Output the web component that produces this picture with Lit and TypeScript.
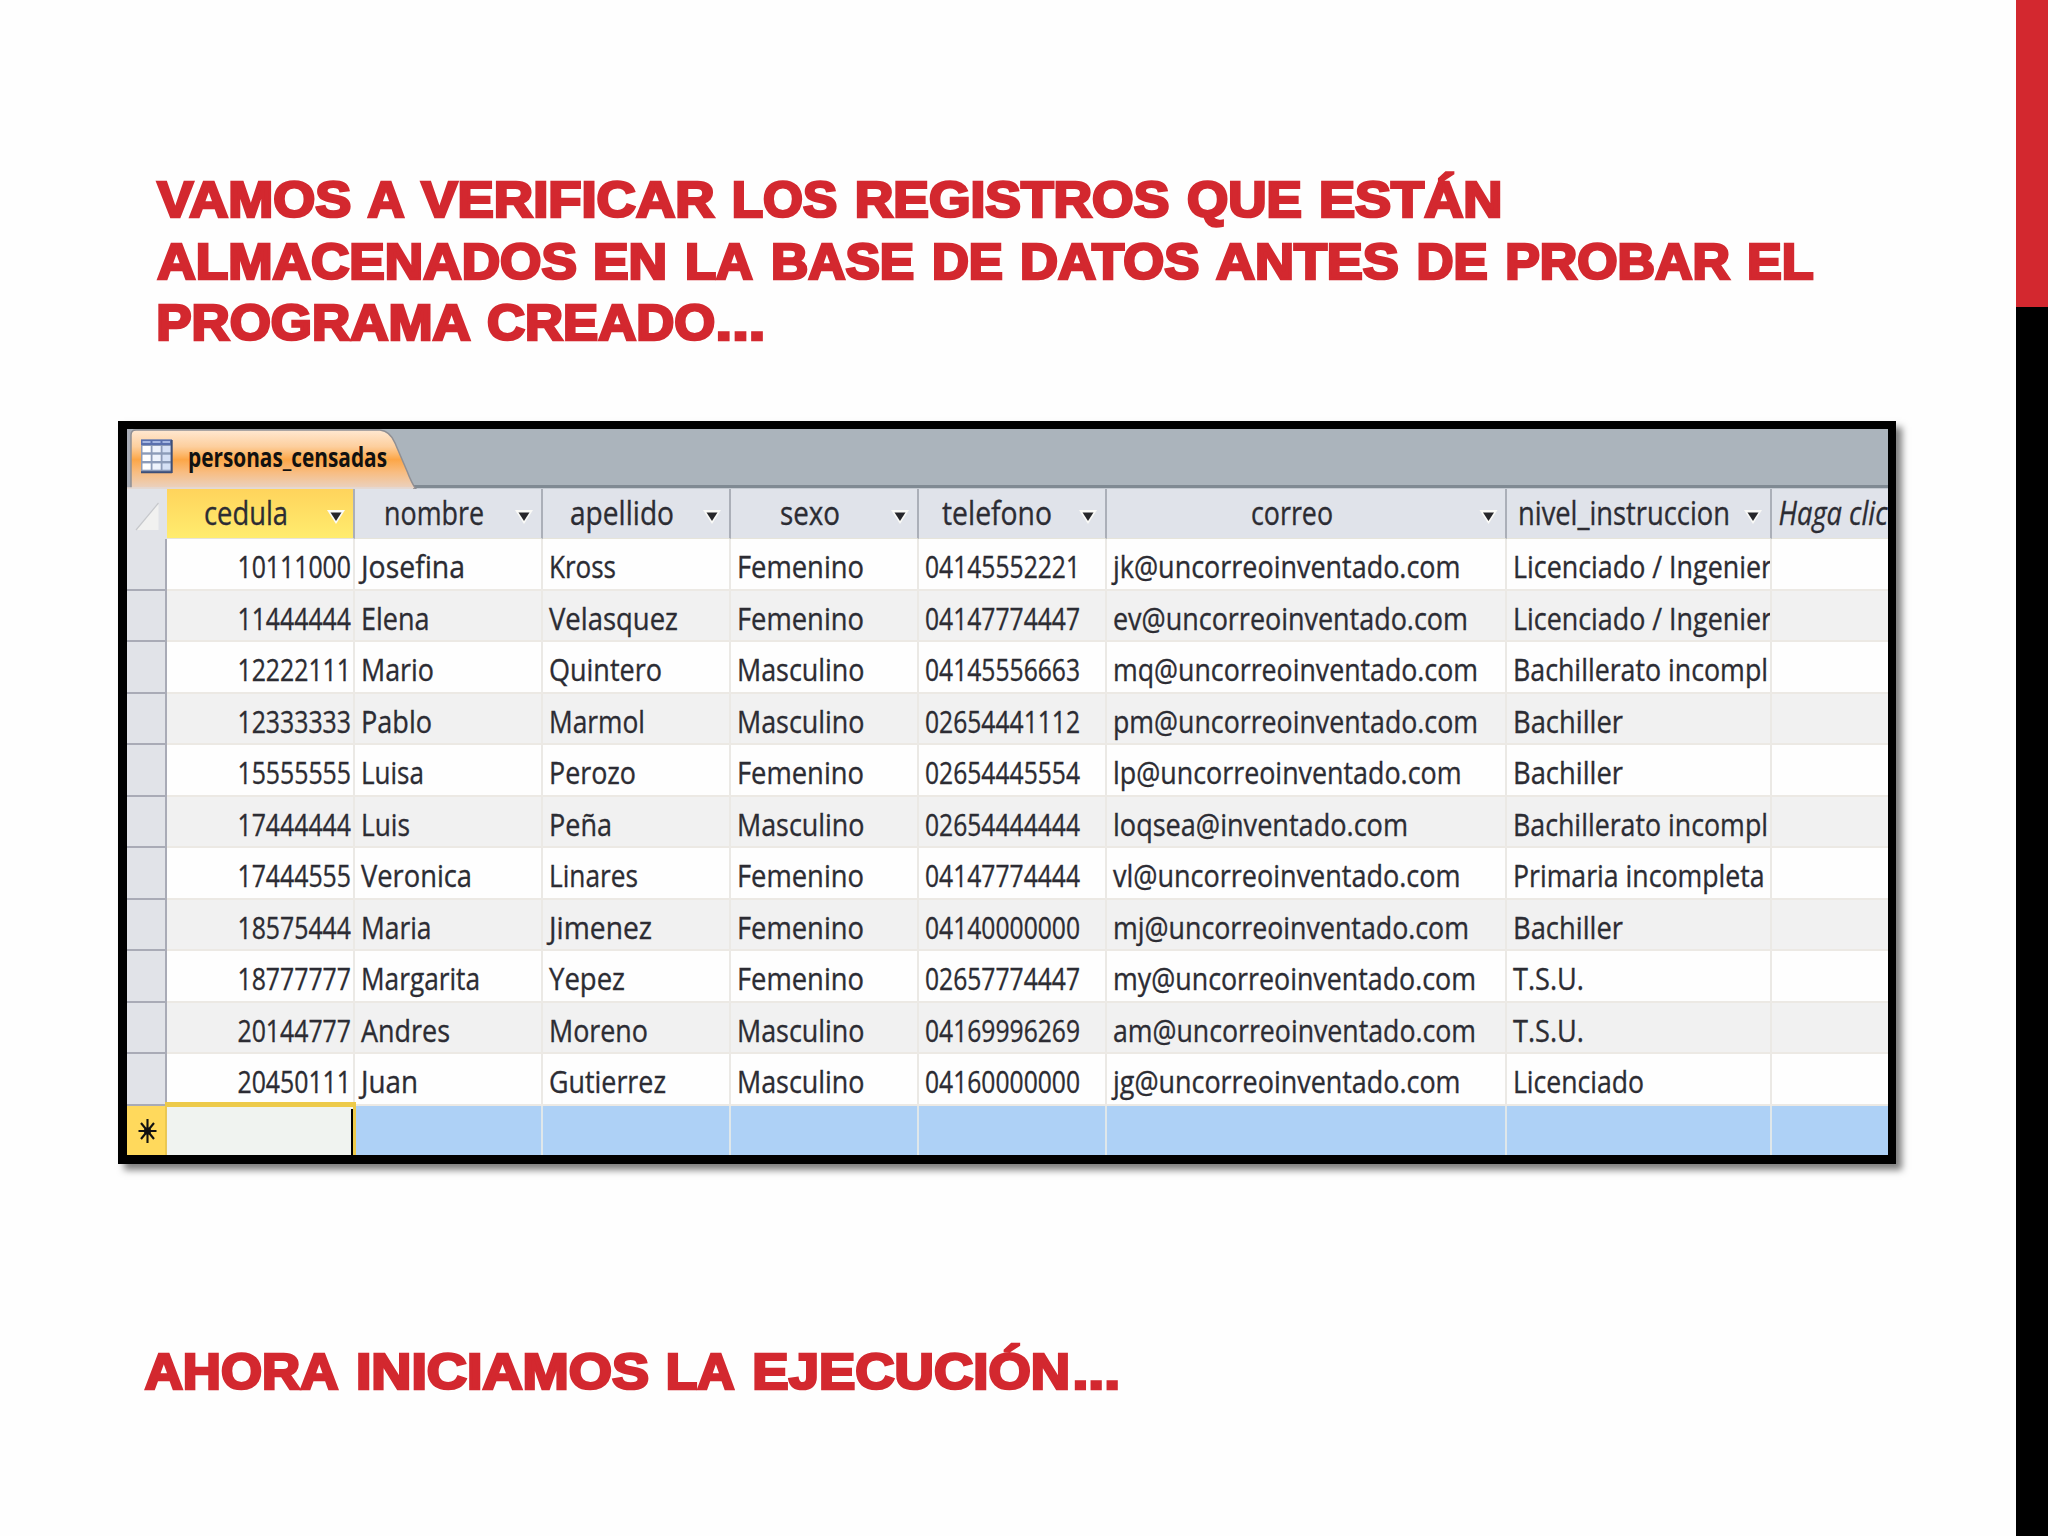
import { LitElement, html, svg, css } from "lit";
import { customElement, property } from "lit/decorators.js";

type Label = [text: string, width: number];
type Word = [text: string, start: number, end: number];

interface Column {
  name: string;
  x: number;
  width: number;
  arrow: number;
}

const columns: Column[] = [
  { name: "cedula", x: 39, width: 81, arrow: 169 },
  { name: "nombre", x: 31, width: 97, arrow: 169 },
  { name: "apellido", x: 29, width: 101, arrow: 169 },
  { name: "sexo", x: 51, width: 57, arrow: 169 },
  { name: "telefono", x: 25, width: 107, arrow: 169 },
  { name: "correo", x: 146, width: 79, arrow: 381.5 },
  { name: "nivel_instruccion", x: 13, width: 209, arrow: 246 },
];

const F: Label = ["Femenino", 124];
const M: Label = ["Masculino", 124.5];
const bachiller: Label = ["Bachiller", 107];
const ingeniero: Label = ["Licenciado / Ingenier", 256];
const incompleto: Label = ["Bachillerato incompl", 252];
const tsu: Label = ["T.S.U.", 68];

const rows: [string, Label, Label, Label, string, Label, Label][] = [
  ["10111000", ["Josefina", 101], ["Kross", 64], F, "04145552221", ["jk@uncorreoinventado.com", 344.5], ingeniero],
  ["11444444", ["Elena", 65.5], ["Velasquez", 126], F, "04147774447", ["ev@uncorreoinventado.com", 352], ingeniero],
  ["12222111", ["Mario", 70], ["Quintero", 110], M, "04145556663", ["mq@uncorreoinventado.com", 362], incompleto],
  ["12333333", ["Pablo", 68], ["Marmol", 93], M, "02654441112", ["pm@uncorreoinventado.com", 362], bachiller],
  ["15555555", ["Luisa", 60], ["Perozo", 84], F, "02654445554", ["lp@uncorreoinventado.com", 345.5], bachiller],
  ["17444444", ["Luis", 46], ["Peña", 60], M, "02654444444", ["loqsea@inventado.com", 292], incompleto],
  ["17444555", ["Veronica", 108], ["Linares", 86], F, "04147774444", ["vl@uncorreoinventado.com", 344.5], ["Primaria incompleta", 248.5]],
  ["18575444", ["Maria", 67.5], ["Jimenez", 100], F, "04140000000", ["mj@uncorreoinventado.com", 353], bachiller],
  ["18777777", ["Margarita", 116], ["Yepez", 73], F, "02657774447", ["my@uncorreoinventado.com", 360], tsu],
  ["20144777", ["Andres", 86], ["Moreno", 96], M, "04169996269", ["am@uncorreoinventado.com", 360], tsu],
  ["20450111", ["Juan", 54], ["Gutierrez", 114], M, "04160000000", ["jg@uncorreoinventado.com", 344.5], ["Licenciado", 128]],
];

/* Words of the headings with the left and right edge of each. */
const intro: Word[][] = [
  [["VAMOS", 156, 350.7], ["A", 366.3, 405.6], ["VERIFICAR", 420, 715.5], ["LOS", 733.8, 836.5],
    ["REGISTROS", 856.8, 1168.6], ["QUE", 1187.8, 1301.3], ["ESTÁN", 1321, 1500.3]],
  [["ALMACENADOS", 156, 576.2], ["EN", 595, 665], ["LA", 687, 753.8], ["BASE", 773, 913.5],
    ["DE", 934, 1002.2], ["DATOS", 1022, 1198.6], ["ANTES", 1214.6, 1398.2], ["DE", 1418.6, 1487],
    ["PROBAR", 1507.3, 1731], ["EL", 1749, 1812.8]],
  [["PROGRAMA", 158.3, 471.7], ["CREADO", 487.8, 714.5], ["...", 717.7, 763.2]],
];
const closing: Word[] = [
  ["AHORA", 143.4, 339.3], ["INICIAMOS", 358, 648.3], ["LA", 667.8, 735.5],
  ["EJECUCIÓN", 754.4, 1068], ["...", 1074.5, 1118],
];

/* Space between a glyph's advance box and its outlined edge. */
const leftGap = (c: string) => ("AVÁ".includes(c) ? -1.3 : "COQGS".includes(c) ? 0.8 : 2.1);
const rightGap = (c: string) => ("AVÁR".includes(c) ? -1 : "N.".includes(c) ? 2.1 : 0.7);

/* One line of text, fitted to a given width. */
@customElement("fit-text")
export class FitText extends LitElement {
  @property() text = "";
  @property({ type: Number }) x = 0;
  @property({ type: Number }) width = 0;
  @property({ type: Number }) baseline = 0;

  static styles = css`
    :host { display: block; width: 100%; height: 100%; overflow: hidden; }
    .box { display: block; width: 100%; height: 100%; overflow: hidden; }
    .text { fill: #2c2c33; stroke: #2c2c33; stroke-width: 0.35px; }
  `;

  render() {
    return html`<svg class="box">
      <text class="text" x=${this.x} y=${this.baseline} textLength=${this.width}
        lengthAdjust="spacingAndGlyphs">${this.text}</text>
    </svg>`;
  }
}

@customElement("app-root")
export class AppRoot extends LitElement {
  static styles = css`
    * { box-sizing: border-box; }
    :host {
      display: flex;
      width: 2048px;
      height: 1536px;
      overflow: hidden;
      background: #fefefe;
    }
    .main {
      flex: 1;
      display: flex;
      flex-direction: column;
      padding-top: 157px;
    }
    .side { width: 32px; background: #000; }
    .side-top { height: 307px; background: #d3282f; }
    .title {
      margin: 0;
      font: 700 49.3px "Liberation Sans", Arial, sans-serif;
    }
    .title-line { display: block; width: 100%; height: 61.5px; overflow: visible; }
    .word { fill: #d3282f; stroke: #d3282f; stroke-width: 2.7px; }
    .intro { height: 264px; }
    .closing { margin-top: 165px; }
    .frame {
      width: 1778px;
      height: 743px;
      margin-left: 118px;
      border: solid #000;
      border-width: 8px 8px 9px 9px;
      box-shadow: 6px 6px 7px rgba(0, 0, 0, 0.5);
      font: 400 31.5px "Open Sans", "Noto Sans", sans-serif;
      background: #fefefe;
      overflow: hidden;
    }
    .tabs {
      height: 59.5px;
      display: flex;
      background: linear-gradient(#abb4bc 0 56.5px, #808a93 56.5px 59px, #c5cbd2 59px);
    }
    .tab-art { width: 300px; height: 59.5px; display: block; }
    .tab-label { font-weight: 700; font-size: 26px; fill: #111; }
    .row {
      display: grid;
      grid-template-columns: 40px repeat(5, 188px) 400px 265px 116px;
      height: 51.5px;
    }
    .cell {
      border-right: 2px solid #ebe9e5;
      border-bottom: 2px solid #ece9e4;
      overflow: hidden;
      min-width: 0;
    }
    .cell:last-child { border-right: 0; }
    .row.odd .cell { background: #f1f1f1; }
    .row .selector {
      background: #e1e3e8;
      border-right: 2px solid #a9abb6;
      border-bottom: 2px solid #a9abb6;
    }
    .row.odd .selector { background: #e1e3e8; }
    .head { height: 50.5px; font-size: 32.5px; background: #e0e3ea; }
    .head .cell {
      display: grid;
      border-bottom: 1px solid #e6e4da;
      border-right: 2px solid #abafb8;
    }
    .head .cell:last-child { border-right: 0; font-style: italic; }
    .head .corner { border-right: 0; border-bottom: 0; background: #e1e3e8; }
    .head .active { background: linear-gradient(#ffd45c, #ffec6e); }
    .head fit-text, .arrow { grid-area: 1 / 1; }
    .arrow { display: block; width: 100%; height: 49px; }
    .new { height: 50px; }
    .new .cell { background: #aed1f6; border-bottom: 0; border-right-color: #dfe7ea; }
    .new .selector { background: #ffd95c; border-right-color: #e8c65c; }
    .new .current { position: relative; background: #f0f3f0; overflow: visible; border-right: 0; }
    .cursor {
      position: absolute;
      left: -2px;
      top: -4px;
      width: 191px;
      height: 60px;
      border: solid #edca4a;
      border-width: 5px 3px 0 1px;
    }
    .caret {
      position: absolute;
      right: 2px;
      top: 3px;
      width: 2px;
      height: 60px;
      background: #000;
    }
    .icon { display: block; width: 100%; height: 100%; }
  `;

  private line(words: Word[]) {
    return html`<svg class="title-line">
      ${words.map(([text, start, end]) => {
        const x = start - leftGap(text[0]);
        const width = end + rightGap(text[text.length - 1]) - x;
        return svg`<text class="word" x=${x} y="60" textLength=${width}
          lengthAdjust="spacingAndGlyphs">${text}</text>`;
      })}
    </svg>`;
  }

  private cell([text, width]: Label, x = 6) {
    return html`<div class="cell"><fit-text .text=${text} .x=${x} .width=${width + 3} .baseline=${39}></fit-text></div>`;
  }

  private tab() {
    const cells = [0, 1, 2].flatMap((r) =>
      [0, 1, 2].map((c) => svg`<rect x=${15.5 + c * 10} y=${17 + r * 8.7} width="8.2" height="6.3"
        fill=${["#ffffff", "#eef3fc", "#d5e0f5"][c]} />`));
    return html`<svg class="tab-art">
      <defs>
        <linearGradient id="tab" x1="0" y1="0" x2="0" y2="1">
          <stop offset="0" stop-color="#ffe8d2" />
          <stop offset="0.28" stop-color="#fdcf9e" />
          <stop offset="0.42" stop-color="#fcb668" />
          <stop offset="0.5" stop-color="#fca647" />
          <stop offset="0.72" stop-color="#f8bd82" />
          <stop offset="1" stop-color="#e9d3c4" />
        </linearGradient>
      </defs>
      <path d="M0 0H4V60H0Z" fill="#aaaeb8" />
      <path d="M4 60V6Q4 1 9 1H253Q263 2 268 14L280 42Q285 55 289 60Z" fill="url(#tab)" stroke="#8f8f94" stroke-width="1.5" />
      <path d="M0 58.2H286V60H0Z" fill="#e3d9d4" />
      <rect x="14" y="10.5" width="31" height="33" fill="#8c9bb8" />
      <path d="M14 10.5H45V16H14Z" fill="#5a70ae" />
      <path d="M15.5 13H23.5M25.5 13H33.5M35.5 13H43" stroke="#a4b6e2" stroke-width="2.2" />
      ${cells}
      <path d="M14 43.2H45M44.7 11V44" stroke="#3d4f78" stroke-width="2" />
      <text class="tab-label" x="61" y="38" textLength="199" lengthAdjust="spacingAndGlyphs">personas_censadas</text>
    </svg>`;
  }

  private header() {
    return html`<div class="row head">
      <div class="cell corner">
        <svg class="icon">
          <path d="M31.5 14V41H9Z" fill="#f1f1f0" />
          <path d="M31.5 14L9 41" stroke="#c6c8cc" stroke-width="1.2" />
        </svg>
      </div>
      ${columns.map((c, i) => html`<div class="cell ${i === 0 ? "active" : ""}">
        <fit-text .text=${c.name} .x=${c.x - 2} .width=${c.width + 3} .baseline=${36}></fit-text>
        <svg class="arrow">
          <path d="M${c.arrow - 9} 21H${c.arrow + 9}L${c.arrow} 35Z" fill="#fbfbf8" />
          <path d="M${c.arrow - 5.5} 23.5H${c.arrow + 5.5}L${c.arrow} 32Z" fill="#26262a" />
        </svg>
      </div>`)}
      <div class="cell"><fit-text .text=${"Haga clic"} .x=${6.5} .width=${109} .baseline=${36}></fit-text></div>
    </div>`;
  }

  render() {
    return html`
      <div class="main">
        <h1 class="title intro">${intro.map((words) => this.line(words))}</h1>
        <div class="frame">
          <div class="tabs">${this.tab()}</div>
          ${this.header()}
          ${rows.map(([id, name, last, sex, phone, mail, level], i) => html`
            <div class="row ${i % 2 ? "odd" : ""}">
              <div class="cell selector"></div>
              ${this.cell([id, 110.5], 70.5)}
              ${this.cell(name)}
              ${this.cell(last)}
              ${this.cell(sex)}
              ${this.cell([phone, 152])}
              ${this.cell(mail)}
              ${this.cell(level)}
              <div class="cell"></div>
            </div>`)}
          <div class="row new">
            <div class="cell selector">
              <svg class="icon">
                <path d="M20.5 13V37M11.5 25H29.5M14 17L27 33M27 17L14 33" stroke="#111" stroke-width="2.1" />
                <circle cx="20.5" cy="25" r="3.6" fill="#111" />
              </svg>
            </div>
            <div class="cell current"><div class="cursor"></div><div class="caret"></div></div>
            ${[0, 1, 2, 3, 4, 5, 6].map(() => html`<div class="cell"></div>`)}
          </div>
        </div>
        <h2 class="title closing">${this.line(closing)}</h2>
      </div>
      <div class="side"><div class="side-top"></div></div>
    `;
  }
}
